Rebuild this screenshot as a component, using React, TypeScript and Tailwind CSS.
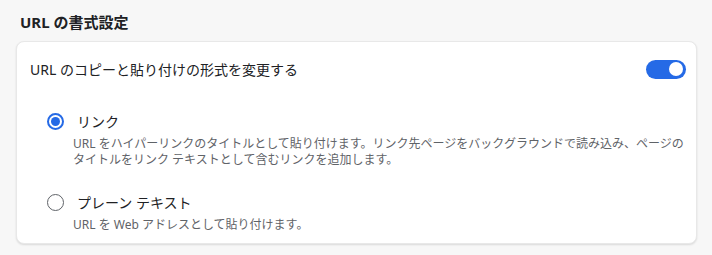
const font = { fontFamily: '"Noto Sans", "Noto Sans CJK JP", sans-serif' };

const options = [
  {
    id: 'link',
    label: 'リンク',
    description:
      'URL をハイパーリンクのタイトルとして貼り付けます。リンク先ページをバックグラウンドで読み込み、ページのタイトルをリンク テキストとして含むリンクを追加します。',
    checked: true,
  },
  {
    id: 'plain',
    label: 'プレーン テキスト',
    description: 'URL を Web アドレスとして貼り付けます。',
    checked: false,
  },
];

function Radio({ checked }: { checked: boolean }) {
  if (checked) {
    return (
      <span className="flex h-[17px] w-[17px] shrink-0 items-center justify-center rounded-full border-2 border-[#256ae6]">
        <span className="h-[9px] w-[9px] rounded-full bg-[#256ae6]" />
      </span>
    );
  }
  return <span className="h-[17px] w-[17px] shrink-0 rounded-full border-[1.5px] border-[#5f6368]" />;
}

export default function App() {
  return (
    <div className="h-[255px] bg-[#f7f7f7] pl-4 pr-[15px] pt-[13px]" style={font}>
      <h2 className="mb-[10px] pl-1 text-[15px] font-bold leading-[18px] text-[#202124]">URL の書式設定</h2>

      <div className="rounded-lg border border-[#e8e8e8] bg-white shadow-[0_1px_2px_rgba(0,0,0,0.12)]">
        <div className="flex h-[54px] items-center justify-between pl-[13px] pr-[10px]">
          <span className="text-[14px] text-[#202124]">URL のコピーと貼り付けの形式を変更する</span>
          <span className="flex h-[19px] w-[40px] items-center justify-end rounded-full bg-[#256ae6] pr-[3px]">
            <span className="h-[14px] w-[14px] rounded-full bg-white" />
          </span>
        </div>

        <div className="flex flex-col gap-[24px] pb-[10px] pl-[30px] pr-[6px] pt-[15px]">
          {options.map((o) => (
            <div key={o.id}>
              <div className="flex h-[20px] items-center gap-[13px]">
                <Radio checked={o.checked} />
                <span className="text-[14px] text-[#202124]">{o.label}</span>
              </div>
              <p className="mt-[5px] pl-[26px] text-[12px] leading-[16px] text-[#5f6368]">{o.description}</p>
            </div>
          ))}
        </div>
      </div>
    </div>
  );
}
